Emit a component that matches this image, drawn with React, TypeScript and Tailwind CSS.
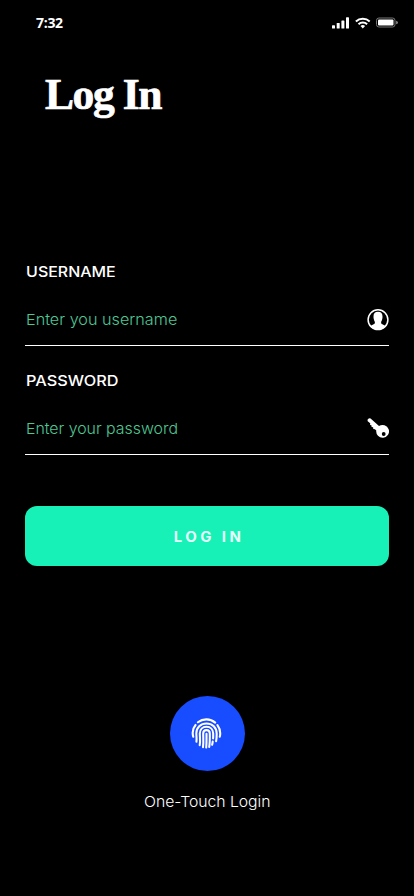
import React from 'react';

const sans = "font-['Inter','Liberation_Sans',sans-serif]";

function StatusBar() {
  return (
    <header className="flex h-[45px] items-center justify-between pl-9 pr-4">
      <span className="font-['Open_Sans',sans-serif] text-[14px] font-bold leading-5 tracking-[-0.3px]">7:32</span>
      <div className="flex items-center">
        <svg width="18" height="12" viewBox="0 0 18 12" fill="#fff">
          <rect x="0" y="8.2" width="3" height="3.3" rx=".6" />
          <rect x="4.7" y="6" width="3" height="5.5" rx=".6" />
          <rect x="9.4" y="3.4" width="3" height="8.1" rx=".6" />
          <rect x="14" y=".3" width="3" height="11.2" rx=".6" />
        </svg>
        <svg className="ml-[5px]" width="16" height="12" viewBox="0 0 16 12" fill="none" stroke="#fff" strokeWidth="2">
          <path d="M.9 4.5a10 10 0 0 1 13.8 0" />
          <path d="M3.5 7.2a6.2 6.2 0 0 1 8.6 0" />
          <path d="M7.8 11.4 5.5 9.1a3.2 3.2 0 0 1 4.6 0Z" fill="#fff" stroke="none" />
        </svg>
        <svg className="ml-[5px]" width="22" height="11" viewBox="0 0 22 11">
          <rect x=".5" y="1" width="18.5" height="9" rx="2.4" fill="none" stroke="#777" />
          <rect x="2" y="2.4" width="15.5" height="6.2" rx="1" fill="#fff" />
          <path d="M20.4 3.7q1.3.4 1.3 1.8t-1.3 1.8z" fill="#bbb" />
        </svg>
      </div>
    </header>
  );
}

function UserIcon() {
  return (
    <svg width="22" height="22" viewBox="0 0 22 22">
      <circle cx="11" cy="10.7" r="9.9" fill="none" stroke="#fff" strokeWidth="1.5" />
      <path fill="#fff" d="M11 2.8c3.1 0 4.6 1.9 4.5 4.6 0 1.2 0 2-.4 3.1-.3 1.4-1 2-1 3 0 1.3.8 1.7 2.2 2.2 1.2.4 2 .8 2.6 1.5A10.3 10.3 0 0 1 11 21a10.3 10.3 0 0 1-7.9-3.8c.6-.7 1.4-1.1 2.6-1.5 1.4-.5 2.2-.9 2.2-2.2 0-1-.7-1.6-1-3-.4-1.1-.4-1.9-.4-3.1-.1-2.7 1.4-4.6 4.5-4.6Z" />
    </svg>
  );
}

function KeyIcon() {
  return (
    <svg width="22" height="22" viewBox="0 0 22 22">
      <path fill="#fff" fillRule="evenodd" d="M.5 1.8 2 .3l1.6.2 8.4 7.6A6.4 6.4 0 1 1 9.3 12.4L7.9 11.2 6.3 11 6.1 9.3 4.6 9 4.4 7.3 3.1 6.9 3.2 5.2.7 3.3ZM16.7 14.1a1.9 1.9 0 1 0 0 3.8 1.9 1.9 0 0 0 0-3.8Z" />
    </svg>
  );
}

function Field(props: { label: string; hint: string; labelClass: string; hintClass: string; icon: React.ReactNode }) {
  return (
    <div className="h-[109px]">
      <div className={`origin-left pl-px text-[14.5px] font-medium leading-5 ${props.labelClass}`}>{props.label}</div>
      <div className="mt-[19px] flex h-[45px] items-center justify-between border-b border-white pl-px pb-[7px]">
        <span className={`origin-left whitespace-nowrap text-[15px] font-light leading-5 text-[#4fc795] ${props.hintClass}`}>{props.hint}</span>
        {props.icon}
      </div>
    </div>
  );
}

function Fingerprint() {
  return (
    <svg className="-ml-px" width="31" height="31" viewBox="0 0 32 32" fill="none" stroke="#fff" strokeWidth="2.15" strokeLinecap="round">
      <path d="M7.1 4.4A14.2 14.2 0 0 1 25 4.8" />
      <path d="M4.7 7.2C1.8 10.6 1.2 15.2 2.3 19.4" />
      <path d="M27.3 7.3c2.6 3.5 3.4 8 2.4 12.1" />
      <path d="M5.6 24.5c.5-3.3-.1-5.7-.1-8.6C5.5 9.8 10 5.6 16 5.6s10.5 4.2 10.5 10.3c0 2.5.1 5-.6 8" />
      <path d="M9 28c.8-4.4.1-7.9.1-12 0-4 2.9-6.9 6.9-6.9s6.9 2.9 6.9 6.9c0 1.8.1 3.5-.1 5M22.4 24.3c-.1 1.2-.3 2.2-.6 3.4" />
      <path d="M12.4 30.1c.7-4.8.2-9.4.2-14 0-2.2 1.3-3.6 3.4-3.6s3.4 1.4 3.4 3.6c0 4.7.2 9.2-.6 13.7" />
      <path d="M16 16.3c0 4.8.2 9.3-.3 14.2" />
    </svg>
  );
}

export default function App() {
  return (
    <main className={`flex h-[896px] w-[414px] flex-col overflow-hidden bg-black text-white ${sans}`}>
      <StatusBar />
      <h1 className="mt-[21px] pl-[45px] font-['Liberation_Serif',serif] text-[43.5px] font-bold leading-[56px] tracking-[-1.4px] [-webkit-text-stroke:0.7px_white]">Log In</h1>
      <form className="mt-[140px] pl-[25px] pr-[25px]">
        <Field label="USERNAME" hint="Enter you username" labelClass="scale-x-[1.1]" hintClass="scale-x-[1.08]" icon={<UserIcon />} />
        <Field label="PASSWORD" hint="Enter your password" labelClass="scale-x-[1.12]" hintClass="scale-x-[1.06] tracking-[-0.02px]" icon={<KeyIcon />} />
        <button type="button" className="-ml-[0.5px] mt-[26px] flex h-[60px] w-[364px] items-center justify-center rounded-xl bg-[#17f1b8] pl-[5px] text-[14px] font-bold tracking-[3.2px] text-[#eafff9]">
          <span className="scale-x-[1.07]">LOG IN</span>
        </button>
      </form>
      <div className="mt-[130px] flex flex-col items-center">
        <button type="button" aria-label="One-Touch Login" className="flex size-[75px] items-center justify-center rounded-full bg-[#184cff]">
          <Fingerprint />
        </button>
        <span className="mt-[20px] scale-x-[1.05] text-[15px] font-light leading-[22px] tracking-[-0.03px]">One-Touch Login</span>
      </div>
    </main>
  );
}
